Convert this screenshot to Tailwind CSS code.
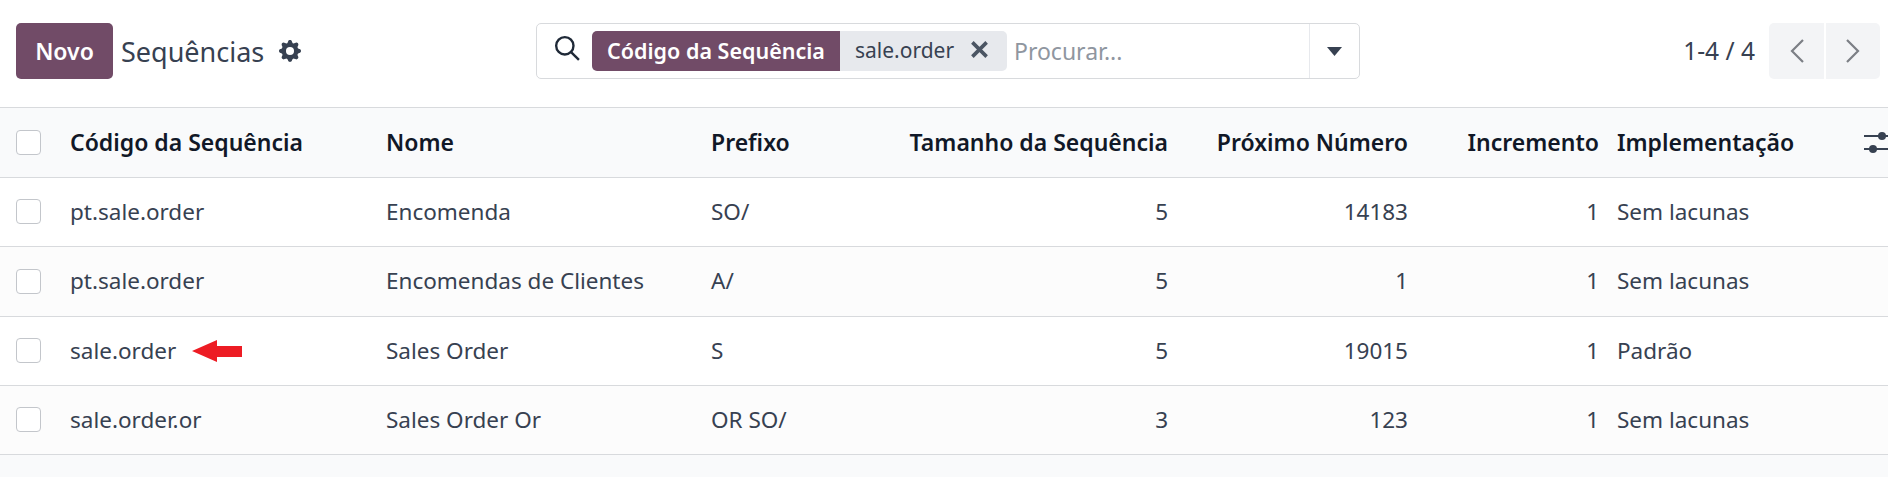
<!DOCTYPE html>
<html lang="en">
<head>
<meta charset="UTF-8">
<script src="https://cdn.jsdelivr.net/npm/@tailwindcss/browser@4"></script>
<title>Sequências</title>
</head>
<body class="h-[477px] overflow-hidden bg-[#f9fafb] font-['Noto_Sans',sans-serif] text-[#374151] text-[22.5px]">
    <!-- control panel -->
    <div class="h-[108px] bg-white border-b border-[#d8dadd] flex items-start pt-[23px] pl-4 pr-2">
        <button class="h-[56px] w-[97px] rounded-[5px] bg-[#714b67] text-white font-semibold text-[23px]">Novo</button>
        <div class="h-[56px] flex items-center ml-2 w-[415px]">
            <span class="text-[27px] mt-[2px]">Sequências</span>
            <svg class="ml-[15px] w-[22px] h-[22px]" viewBox="0 0 16 16" fill="#374151"><path fill-rule="evenodd" d="M9.405 1.05c-.413-1.4-2.397-1.4-2.81 0l-.1.34a1.464 1.464 0 0 1-2.105.872l-.31-.17c-1.283-.698-2.686.705-1.987 1.987l.169.311c.446.82.023 1.841-.872 2.105l-.34.1c-1.4.413-1.4 2.397 0 2.81l.34.1a1.464 1.464 0 0 1 .872 2.105l-.17.31c-.698 1.283.705 2.686 1.987 1.987l.311-.169a1.464 1.464 0 0 1 2.105.872l.1.34c.413 1.4 2.397 1.4 2.81 0l.1-.34a1.464 1.464 0 0 1 2.105-.872l.31.17c1.283.698 2.686-.705 1.987-1.987l-.169-.311a1.464 1.464 0 0 1 .872-2.105l.34-.1c1.4-.413 1.4-2.397 0-2.81l-.34-.1a1.464 1.464 0 0 1-.872-2.105l.17-.31c.698-1.283-.705-2.686-1.987-1.987l-.311.169a1.464 1.464 0 0 1-2.105-.872l-.1-.34zM8 10.93a2.929 2.929 0 1 1 0-5.86 2.929 2.929 0 0 1 0 5.858z"/></svg>
        </div>
        <!-- search -->
        <div class="h-[56px] w-[824px] border border-[#d8dadd] rounded-[5px] flex items-center">
            <svg class="ml-[17px] w-[26px] h-[26px] -mt-1.5" viewBox="0 0 24 24" fill="none" stroke="#1f2937" stroke-width="2.2"><circle cx="10" cy="10" r="8"/><path d="M16 16l7 7"/></svg>
            <div class="ml-[12px] h-[40px] flex items-stretch">
                <span class="w-[248px] bg-[#714b67] text-white font-semibold text-[21.500px] rounded-l-[5px] flex items-center justify-center">Código da Sequência</span>
                <span class="w-[167px] bg-[#e7e9ed] rounded-r-[5px] flex items-center pl-[15px] text-[21px]">sale.order
                    <svg class="ml-[16px] w-[19px] h-[19px] -mt-1" viewBox="0 0 16 16" stroke="#4b5563" stroke-width="3"><path d="M2 2l12 12M14 2L2 14"/></svg>
                </span>
            </div>
            <span class="ml-[7px] text-[#8f96a0] flex-1 text-[23px]">Procurar...</span>
            <div class="w-[50px] h-full border-l border-[#e7e9ed] flex items-center justify-center">
                <svg class="w-[15px] h-[9px]" viewBox="0 0 15 9" fill="#374151"><path d="M0 0h15L7.500 9z"/></svg>
            </div>
        </div>
        <!-- pager -->
        <div class="ml-auto flex items-center h-[56px]">
            <span class="mr-[14px] text-[24.500px]">1-4 / 4</span>
            <button class="w-[55px] h-[56px] bg-[#f3f4f6] rounded-l-[5px] flex items-center justify-center">
                <svg class="w-[16px] h-[26px]" viewBox="0 0 16 26" fill="none" stroke="#7c7f85" stroke-width="2.200"><path d="M14 2L3 13l11 11"/></svg>
            </button>
            <button class="ml-[2px] w-[54px] h-[56px] bg-[#f3f4f6] rounded-r-[5px] flex items-center justify-center">
                <svg class="w-[16px] h-[26px]" viewBox="0 0 16 26" fill="none" stroke="#7c7f85" stroke-width="2.200"><path d="M2 2l11 11L2 24"/></svg>
            </button>
        </div>
    </div>

    <!-- list -->
    <table class="w-[1888px] table-fixed border-collapse">
        <colgroup>
            <col class="w-[70px]"><col class="w-[316px]"><col class="w-[325px]"><col class="w-[190px]"><col class="w-[267px]"><col class="w-[240px]"><col class="w-[191px]"><col class="w-[289px]">
        </colgroup>
        <thead>
            <tr class="h-[69px] bg-[#f9fafb] border-b border-[#d8dadd] text-[#111827] text-left text-[23px]">
                <th class="pl-4 font-semibold"><span class="block w-[25px] h-[25px] rounded-[4px] border border-[#c3c6cb] bg-white"></span></th>
                <th class="font-semibold">Código da Sequência</th>
                <th class="font-semibold">Nome</th>
                <th class="font-semibold">Prefixo</th>
                <th class="font-semibold text-right whitespace-nowrap">Tamanho da Sequência</th>
                <th class="font-semibold text-right whitespace-nowrap">Próximo Número</th>
                <th class="font-semibold text-right">Incremento</th>
                <th class="font-semibold pl-[18px] relative overflow-hidden">Implementação
                    <svg class="absolute left-[265px] top-[22px] w-[24px] h-[24px]" viewBox="0 0 24 24" fill="#374151"><rect y="5" width="24" height="2"/><rect y="18" width="24" height="2"/><circle cx="18" cy="6" r="4"/><circle cx="9" cy="19" r="4"/></svg>
                </th>
            </tr>
        </thead>
        <tbody>
            <tr class="h-[69px] bg-white border-b border-[#d8dadd]">
                <td class="pl-4"><span class="block w-[25px] h-[25px] rounded-[4px] border border-[#c3c6cb] bg-white"></span></td>
                <td>pt.sale.order</td><td>Encomenda</td><td>SO/</td><td class="text-right">5</td><td class="text-right">14183</td><td class="text-right">1</td><td class="pl-[18px]">Sem lacunas</td>
            </tr>
            <tr class="h-[70px] bg-[#fcfcfc] border-b border-[#d8dadd]">
                <td class="pl-4"><span class="block w-[25px] h-[25px] rounded-[4px] border border-[#c3c6cb] bg-white"></span></td>
                <td>pt.sale.order</td><td class="whitespace-nowrap">Encomendas de Clientes</td><td>A/</td><td class="text-right">5</td><td class="text-right">1</td><td class="text-right">1</td><td class="pl-[18px]">Sem lacunas</td>
            </tr>
            <tr class="h-[69px] bg-white border-b border-[#d8dadd]">
                <td class="pl-4"><span class="block w-[25px] h-[25px] rounded-[4px] border border-[#c3c6cb] bg-white"></span></td>
                <td><div class="flex items-center">sale.order
                    <svg class="ml-[16px] w-[50px] h-[22px]" viewBox="0 0 50 22" fill="#ed1c24"><path d="M0 11L25 0v6h25v11H25v5z"/></svg>
                </div></td>
                <td>Sales Order</td><td>S</td><td class="text-right">5</td><td class="text-right">19015</td><td class="text-right">1</td><td class="pl-[18px]">Padrão</td>
            </tr>
            <tr class="h-[69px] bg-[#fcfcfc] border-b border-[#d8dadd]">
                <td class="pl-4"><span class="block w-[25px] h-[25px] rounded-[4px] border border-[#c3c6cb] bg-white"></span></td>
                <td>sale.order.or</td><td>Sales Order Or</td><td>OR SO/</td><td class="text-right">3</td><td class="text-right">123</td><td class="text-right">1</td><td class="pl-[18px]">Sem lacunas</td>
            </tr>
        </tbody>
    </table>
</body>
</html>
